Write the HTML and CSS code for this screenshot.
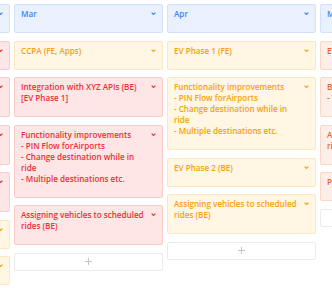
FILE: index.html
```html
<!DOCTYPE html>
<html lang="en">
<head>
  <meta charset="UTF-8">
  <title>Roadmap Board</title>
  <link rel="stylesheet" href="styles.css">
</head>
<body>
  <div class="board">

    <div class="column">
      <div class="card month"><span class="card-text">Feb</span><svg class="chev" viewBox="0 0 5 3"><polyline points="0.6,0.6 2.5,2.4 4.4,0.6"/></svg></div>
      <div class="card red"><span class="card-text">Driver app revamp (Apps)</span><svg class="chev" viewBox="0 0 5 3"><polyline points="0.6,0.6 2.5,2.4 4.4,0.6"/></svg></div>
      <div class="card red"><span class="card-text">Payments integration with the wallet provider (BE)</span><svg class="chev" viewBox="0 0 5 3"><polyline points="0.6,0.6 2.5,2.4 4.4,0.6"/></svg></div>
      <div class="card red"><span class="card-text">Reporting dashboard for the fleet operators (FE)</span><svg class="chev" viewBox="0 0 5 3"><polyline points="0.6,0.6 2.5,2.4 4.4,0.6"/></svg></div>
      <div class="card red"><span class="card-text">Notifications for ride updates and driver delays</span><svg class="chev" viewBox="0 0 5 3"><polyline points="0.6,0.6 2.5,2.4 4.4,0.6"/></svg></div>
      <div class="card amber"><span class="card-text">Referral program (FE)</span><svg class="chev" viewBox="0 0 5 3"><polyline points="0.6,0.6 2.5,2.4 4.4,0.6"/></svg></div>
      <div class="card amber"><span class="card-text">Promo codes (BE)</span><svg class="chev" viewBox="0 0 5 3"><polyline points="0.6,0.6 2.5,2.4 4.4,0.6"/></svg></div>
    </div>

    <div class="column">
      <div class="card month"><span class="card-text">Mar</span><svg class="chev" viewBox="0 0 5 3"><polyline points="0.6,0.6 2.5,2.4 4.4,0.6"/></svg></div>
      <div class="card amber"><span class="card-text">CCPA (FE, Apps)</span><svg class="chev" viewBox="0 0 5 3"><polyline points="0.6,0.6 2.5,2.4 4.4,0.6"/></svg></div>
      <div class="card red"><span class="card-text">Integration with XYZ APIs (BE) [EV Phase 1]</span><svg class="chev" viewBox="0 0 5 3"><polyline points="0.6,0.6 2.5,2.4 4.4,0.6"/></svg></div>
      <div class="card red"><span class="card-text">Functionality improvements<br>- PIN Flow forAirports<br>- Change destination while in ride<br>- Multiple destinations etc.</span><svg class="chev" viewBox="0 0 5 3"><polyline points="0.6,0.6 2.5,2.4 4.4,0.6"/></svg></div>
      <div class="card red"><span class="card-text">Assigning vehicles to scheduled rides (BE)</span><svg class="chev" viewBox="0 0 5 3"><polyline points="0.6,0.6 2.5,2.4 4.4,0.6"/></svg></div>
      <div class="add-card"><svg viewBox="0 0 7 7"><path d="M3.5 0v7M0 3.5h7"/></svg></div>
    </div>

    <div class="column">
      <div class="card month"><span class="card-text">Apr</span><svg class="chev" viewBox="0 0 5 3"><polyline points="0.6,0.6 2.5,2.4 4.4,0.6"/></svg></div>
      <div class="card amber"><span class="card-text">EV Phase 1 (FE)</span><svg class="chev" viewBox="0 0 5 3"><polyline points="0.6,0.6 2.5,2.4 4.4,0.6"/></svg></div>
      <div class="card amber"><span class="card-text">Functionality improvements<br>- PIN Flow forAirports<br>- Change destination while in ride<br>- Multiple destinations etc.</span><svg class="chev" viewBox="0 0 5 3"><polyline points="0.6,0.6 2.5,2.4 4.4,0.6"/></svg></div>
      <div class="card amber"><span class="card-text">EV Phase 2 (BE)</span><svg class="chev" viewBox="0 0 5 3"><polyline points="0.6,0.6 2.5,2.4 4.4,0.6"/></svg></div>
      <div class="card amber"><span class="card-text">Assigning vehicles to scheduled rides (BE)</span><svg class="chev" viewBox="0 0 5 3"><polyline points="0.6,0.6 2.5,2.4 4.4,0.6"/></svg></div>
      <div class="add-card"><svg viewBox="0 0 7 7"><path d="M3.5 0v7M0 3.5h7"/></svg></div>
    </div>

    <div class="column">
      <div class="card month"><span class="card-text">May</span><svg class="chev" viewBox="0 0 5 3"><polyline points="0.6,0.6 2.5,2.4 4.4,0.6"/></svg></div>
      <div class="card orange"><span class="card-text">EV Phase 3 (FE)</span><svg class="chev" viewBox="0 0 5 3"><polyline points="0.6,0.6 2.5,2.4 4.4,0.6"/></svg></div>
      <div class="card orange"><span class="card-text">Bug fixes<br>- Trip history export</span><svg class="chev" viewBox="0 0 5 3"><polyline points="0.6,0.6 2.5,2.4 4.4,0.6"/></svg></div>
      <div class="card orange"><span class="card-text">Assigning vehicles to scheduled rides (BE)</span><svg class="chev" viewBox="0 0 5 3"><polyline points="0.6,0.6 2.5,2.4 4.4,0.6"/></svg></div>
      <div class="card orange"><span class="card-text">Payouts (BE)</span><svg class="chev" viewBox="0 0 5 3"><polyline points="0.6,0.6 2.5,2.4 4.4,0.6"/></svg></div>
      <div class="add-card"><svg viewBox="0 0 7 7"><path d="M3.5 0v7M0 3.5h7"/></svg></div>
    </div>

  </div>
</body>
</html>
```

FILE: styles.css
```css
body {
  margin: 0;
  background: #fff;
  font-family: "Open Sans", "Noto Sans", sans-serif;
  overflow: hidden;
}

.board {
  display: flex;
  gap: 4px;
  margin-left: -139px;
  padding-top: 4px;
}

.column {
  flex: 0 0 149px;
  display: flex;
  flex-direction: column;
  gap: 7.5px;
}

.card {
  display: flex;
  align-items: flex-start;
  border: 1px solid;
  border-radius: 2px;
  padding: 3px 6px 13px 6px;
  font-size: 8.1px;
  font-weight: 600;
  line-height: 11px;
}

.card-text {
  flex: 1;
}

.chev {
  width: 5px;
  height: 3px;
  margin: 4px 0 0 4px;
  fill: none;
  stroke: currentColor;
  stroke-width: 1.2;
}

.month {
  background: #eaf1fe;
  border-color: #d2e1fc;
  color: #3b82f6;
}

.red {
  background: #ffe6e6;
  border-color: #fdcaca;
  color: #ee2f36;
}

.amber {
  background: #fff6e4;
  border-color: #fde7bf;
  color: #f5a20c;
}

.orange {
  background: #fdefe7;
  border-color: #fbd8c6;
  color: #e8671f;
}

.add-card {
  height: 16px;
  display: flex;
  align-items: center;
  justify-content: center;
  border: 1px solid #ebebeb;
  border-radius: 2px;
  background: #fff;
}

.add-card svg {
  width: 7px;
  height: 7px;
  stroke: #c4c4c4;
  stroke-width: 1;
}
```
